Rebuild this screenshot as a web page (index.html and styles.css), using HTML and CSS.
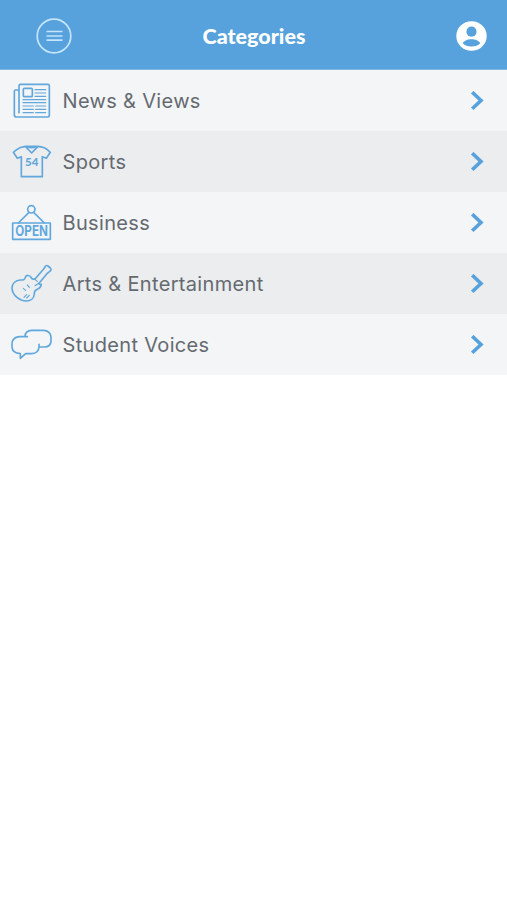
FILE: index.html
```html
<!DOCTYPE html>
<html lang="en">
<head>
<meta charset="utf-8">
<title>Categories</title>
<link rel="stylesheet" href="styles.css">
</head>
<body>
<header class="header">
  <button class="icon-button" aria-label="Menu">
    <svg class="menu-icon" viewBox="0 0 36 36"><circle cx="18" cy="18" r="16.8"/><path d="M10.500 13.500h16M10.500 18h16M10.500 22.200h16"/></svg>
  </button>
  <h1 class="title">Categories</h1>
  <button class="icon-button" aria-label="Account">
    <svg class="user-icon" viewBox="0 0 31 30"><ellipse class="disc" cx="15.5" cy="15" rx="15.2" ry="14.7"/><circle cx="15.5" cy="10.7" r="5.1"/><path d="M6.800 22.300c1.200-2.500 4.800-4 8.700-4s7.500 1.500 8.700 4c-2 2.200-5 3.200-8.700 3.200s-6.700-1-8.700-3.200z"/></svg>
  </button>
</header>
<main>
  <ul class="list">
    <li class="row">
      <svg class="category-icon" viewBox="0 -12 180 183"><path d="M57 116V35q0-4 4-4h83q4 0 4 4v89q0 5-5 5H49q-6 0-6-6V52q0-4 4-4h9"/><rect x="70" y="43" width="27" height="25" rx="3"/><path class="fine" d="M105 47h32M105 57h32M105 67h32M69 77h68M69 86h68M69 96h31M107 96h30M69 106h31M107 106h30M69 116h31M107 116h30"/></svg>
      <span class="label">News &amp; Views</span>
      <svg class="chevron" viewBox="0 0 14 20"><path d="M2.200 1.200 11 9.500l-8.800 8.300"/></svg>
    </li>
    <li class="row">
      <svg class="category-icon" viewBox="0 -12 180 183"><path d="M76 34h38q19 2 28 10l9 8-12 18-12-5v60H64V65l-12 5-12-18 10-8q10-8 26-10zM76 34l19 20 19-20M83 35q12 6 24 0"/><text class="number" x="75" y="94" textLength="40" lengthAdjust="spacingAndGlyphs">54</text></svg>
      <span class="label">Sports</span>
      <svg class="chevron" viewBox="0 0 14 20"><path d="M2.200 1.200 11 9.500l-8.800 8.300"/></svg>
    </li>
    <li class="row">
      <svg class="category-icon" viewBox="0 -12 180 183"><circle cx="94" cy="40" r="11"/><path d="M87 49 55 81M101 49l32 32"/><rect x="38" y="81" width="113" height="49"/><text class="open" x="46" y="121" textLength="98" lengthAdjust="spacingAndGlyphs">OPEN</text></svg>
      <span class="label">Business</span>
      <svg class="chevron" viewBox="0 0 14 20"><path d="M2.200 1.200 11 9.500l-8.800 8.300"/></svg>
    </li>
    <li class="row">
      <svg class="category-icon" viewBox="0 -12 180 183"><path d="M105 66l26-30 6-9q3-3 7 0l7 6q4 4 1 8l-10 8-26 31q4 3 8 2-1 9-12 15c-8 2-9 6-9 14-1 13-11 21-24 21-21 0-42-18-43-38 0-14 10-24 25-25 9 0 13 0 15-8 3-8 14-7 17 0 2 5 6 7 12 5"/><path class="fine" d="M70 94l7 6M82 84l6 7M72 121l8-8M80 123l8-8M102 65l10 8M105 86l11-7"/></svg>
      <span class="label">Arts &amp; Entertainment</span>
      <svg class="chevron" viewBox="0 0 14 20"><path d="M2.200 1.200 11 9.500l-8.800 8.300"/></svg>
    </li>
    <li class="row">
      <svg class="category-icon" viewBox="0 -12 180 183"><path d="M82 56H58q-22 2-22 23v7q0 19 25 21v14l16-14h18q21-1 22-20V79M75 56q0-18 20-19h35q22 1 23 21v12q-1 16-20 17h-16"/></svg>
      <span class="label">Student Voices</span>
      <svg class="chevron" viewBox="0 0 14 20"><path d="M2.200 1.200 11 9.500l-8.800 8.300"/></svg>
    </li>
  </ul>
</main>
</body>
</html>
```
FILE: styles.css
```css
* { box-sizing: border-box; }

body {
  margin: 0;
  min-height: 100vh;
  background: #fff;
  font-family: Inter, "Liberation Sans", sans-serif;
}

.header {
  display: grid;
  grid-template-columns: 36px 1fr 36px;
  align-items: center;
  height: 70px;
  padding: 2px 18px 0 36px;
  background: #57a2dc;
  border-bottom: 1px solid #80b8e5;
}

.icon-button {
  display: flex;
  justify-content: center;
  padding: 0;
  border: 0;
  background: none;
}

.menu-icon {
  width: 36px;
  height: 36px;
  fill: none;
  stroke: #c4e5fb;
  stroke-width: 1.7;
}

.user-icon {
  width: 31px;
  height: 30px;
  fill: #57a2dc;
}

.user-icon .disc { fill: #fff; }

.title {
  margin: 0;
  padding-right: 17px;
  color: #fff;
  font: 900 21.5px/28px Lato, sans-serif;
  text-align: center;
}

.list {
  margin: 0;
  padding: 0;
  list-style: none;
}

.row {
  display: flex;
  align-items: center;
  height: 61px;
  padding-right: 23px;
  background: #f3f5f7;
}

.row:nth-child(even) { background: #ebedef; }

.category-icon {
  flex: none;
  width: 60px;
  height: 61px;
  fill: none;
  stroke: #62a8dd;
  stroke-width: 5;
  stroke-linecap: round;
  stroke-linejoin: round;
}

.category-icon .fine { stroke-width: 3.5; }

.category-icon text {
  fill: #62a8dd;
  stroke: none;
}

.number { font: 900 34px Lato, sans-serif; }
.open { font: 700 42px Inter, sans-serif; }

.label {
  flex: 1;
  padding-left: 2.5px;
  color: #656a70;
  font-size: 20px;
  line-height: 28px;
  letter-spacing: 0.33px;
}

.chevron {
  width: 14px;
  height: 20px;
  fill: none;
  stroke: #57a2dc;
  stroke-width: 3.6;
}
```
